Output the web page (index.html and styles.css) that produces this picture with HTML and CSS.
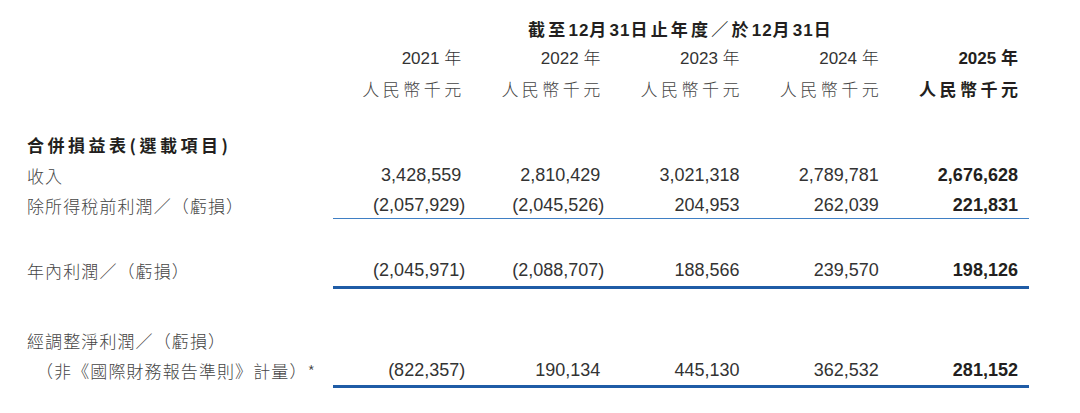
FILE: index.html
```html
<!DOCTYPE html>
<html lang="zh-Hant">
<head>
<meta charset="utf-8">
<title>財務摘要</title>
<link rel="stylesheet" href="styles.css">
</head>
<body>
<div class="sheet">
  <div class="row r-head">
    <div class="cell label"></div>
    <div class="cell span5 period">截至<b class="lat">12</b>月<b class="lat">31</b>日止年度／於<b class="lat">12</b>月<b class="lat">31</b>日</div>
  </div>
  <div class="row r-year">
    <div class="cell label"></div>
    <div class="cell num yr">2021 <span class="cjk">年</span></div>
    <div class="cell num yr">2022 <span class="cjk">年</span></div>
    <div class="cell num yr">2023 <span class="cjk">年</span></div>
    <div class="cell num yr">2024 <span class="cjk">年</span></div>
    <div class="cell num yr strong">2025 <span class="cjk">年</span></div>
  </div>
  <div class="row r-cur">
    <div class="cell label"></div>
    <div class="cell num cur"><span class="tr">人民幣千元</span></div>
    <div class="cell num cur"><span class="tr">人民幣千元</span></div>
    <div class="cell num cur"><span class="tr">人民幣千元</span></div>
    <div class="cell num cur"><span class="tr">人民幣千元</span></div>
    <div class="cell num cur strong"><span class="tr">人民幣千元</span></div>
  </div>

  <div class="row r-title">
    <div class="cell label title">合併損益表(選載項目)</div>
  </div>
  <div class="row r-rev">
    <div class="cell label">收入</div>
    <div class="cell num">3,428,559</div>
    <div class="cell num">2,810,429</div>
    <div class="cell num">3,021,318</div>
    <div class="cell num">2,789,781</div>
    <div class="cell num strong">2,676,628</div>
  </div>
  <div class="row r-pbt rule-thin">
    <div class="cell label">除所得稅前利潤／（虧損）</div>
    <div class="cell num"><span class="neg">(2,057,929)</span></div>
    <div class="cell num"><span class="neg">(2,045,526)</span></div>
    <div class="cell num">204,953</div>
    <div class="cell num">262,039</div>
    <div class="cell num strong">221,831</div>
  </div>

  <div class="row r-np rule-thick">
    <div class="cell label">年內利潤／（虧損）</div>
    <div class="cell num"><span class="neg">(2,045,971)</span></div>
    <div class="cell num"><span class="neg">(2,088,707)</span></div>
    <div class="cell num">188,566</div>
    <div class="cell num">239,570</div>
    <div class="cell num strong">198,126</div>
  </div>

  <div class="row r-adj">
    <div class="cell label">經調整淨利潤／（虧損）</div>
  </div>
  <div class="row r-adj2 rule-thick">
    <div class="cell label indent">（非《國際財務報告準則》計量）*</div>
    <div class="cell num"><span class="neg">(822,357)</span></div>
    <div class="cell num">190,134</div>
    <div class="cell num">445,130</div>
    <div class="cell num">362,532</div>
    <div class="cell num strong">281,152</div>
  </div>
</div>
</body>
</html>
```

FILE: styles.css
```css
html, body {
  margin: 0;
  padding: 0;
  background: #ffffff;
}

body {
  font-family: "Liberation Sans", "Noto Sans CJK TC", sans-serif;
  color: #333333;
}

.sheet {
  width: 1080px;
  padding-top: 16px;
}

.row {
  display: grid;
  grid-template-columns: 333px repeat(5, 139.2px);
  grid-template-rows: minmax(0, 1fr);
  height: 25px;
}

.cell {
  box-sizing: border-box;
  line-height: 25px;
  white-space: nowrap;
  min-height: 0;
}

.label {
  padding-left: 27px;
  font-family: "Noto Sans CJK TC", "Liberation Sans", sans-serif;
  font-size: 17px;
  font-weight: 300;
  letter-spacing: 1.1px;
  color: #454545;
}

.label.title {
  font-weight: 700;
  letter-spacing: 3.5px;
  color: #231f20;
}

.label.indent {
  padding-left: 36px;
}

.num {
  text-align: right;
  padding-right: 11px;
  font-size: 18px;
  color: #333333;
}

.num.strong {
  font-weight: 700;
  color: #231f20;
}

.neg {
  margin-right: -4px;
}

.cjk {
  font-family: "Noto Sans CJK TC", sans-serif;
  font-weight: 300;
  font-size: 17px;
  line-height: 0;
}

.strong .cjk {
  font-weight: 700;
}

.yr {
  font-size: 17px;
}

.cur {
  font-family: "Noto Sans CJK TC", sans-serif;
  font-size: 17px;
  font-weight: 300;
  letter-spacing: 3.5px;
  color: #454545;
}

.cur.strong {
  font-weight: 700;
  color: #231f20;
}

.cur .tr {
  margin-right: -3.5px;
}

.span5 {
  grid-column: 2 / span 5;
}

.period {
  text-align: center;
  font-family: "Noto Sans CJK TC", sans-serif;
  font-size: 17px;
  font-weight: 700;
  letter-spacing: 3.2px;
  color: #231f20;
}

.period .lat {
  font-family: "Liberation Sans", sans-serif;
  font-weight: 700;
  font-size: 17px;
  letter-spacing: 1px;
}

/* vertical rhythm: fixed row boxes */
.r-year { margin-top: 5px; }
.r-cur { margin-top: 5px; }
.r-title { margin-top: 31px; }
.r-rev { margin-top: 6px; }
.r-pbt { margin-top: 5px; height: 26px; }
.r-np { margin-top: 39px; height: 31px; }
.r-adj { margin-top: 39px; }
.r-adj2 { margin-top: 5px; height: 30px; }

.rule-thin .num {
  border-bottom: 1px solid #3f7fc4;
}

.r-np .cell {
  padding-bottom: 3px;
}

.r-adj2 .cell {
  padding-bottom: 2px;
}

.rule-thick .num {
  border-bottom: 3px solid #1f5ca6;
}
```
